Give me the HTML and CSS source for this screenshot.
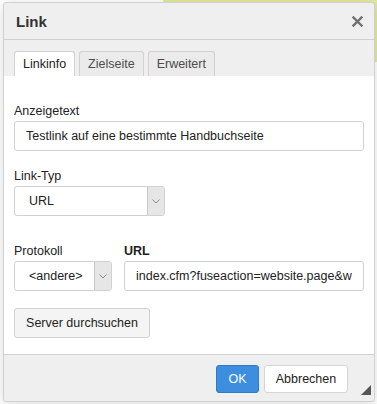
FILE: index.html
```html
<!DOCTYPE html>
<html lang="de">
<head>
    <meta charset="UTF-8">
    <title>Link</title>
    <link rel="stylesheet" href="styles.css">
</head>
<body>
    <div class="dialog">
        <div class="dialog-title">
            <span>Link</span>
            <a class="close" title="Schließen">
                <svg width="11" height="11" viewBox="0 0 11 11">
                    <path d="M1.5 1.5 L9.5 9.5 M9.5 1.5 L1.5 9.5" stroke="#707070" stroke-width="2.4" stroke-linecap="square"/>
                </svg>
            </a>
        </div>
        <div class="tabs">
            <div class="tab active">Linkinfo</div>
            <div class="tab">Zielseite</div>
            <div class="tab">Erweitert</div>
        </div>
        <div class="dialog-body">
            <div class="field">
                <label for="text">Anzeigetext</label>
                <input type="text" id="text" class="text-input" value="Testlink auf eine bestimmte Handbuchseite">
            </div>
            <div class="field">
                <label>Link-Typ</label>
                <div class="select select-type">
                    <span class="select-value">URL</span>
                    <span class="select-arrow">
                        <svg width="8" height="5" viewBox="0 0 8 5"><path d="M0.5 0.5 L4 4 L7.5 0.5" fill="none" stroke="#888" stroke-width="1"/></svg>
                    </span>
                </div>
            </div>
            <div class="field-row">
                <div class="field">
                    <label>Protokoll</label>
                    <div class="select select-proto">
                        <span class="select-value">&lt;andere&gt;</span>
                        <span class="select-arrow">
                            <svg width="8" height="5" viewBox="0 0 8 5"><path d="M0.5 0.5 L4 4 L7.5 0.5" fill="none" stroke="#888" stroke-width="1"/></svg>
                        </span>
                    </div>
                </div>
                <div class="field field-grow">
                    <label for="url" class="strong">URL</label>
                    <input type="text" id="url" class="text-input" value="index.cfm?fuseaction=website.page&amp;wsid=12">
                </div>
            </div>
            <button class="btn-browse">Server durchsuchen</button>
        </div>
        <div class="dialog-footer">
            <button class="btn btn-ok">OK</button>
            <button class="btn btn-cancel">Abbrechen</button>
            <span class="resizer"></span>
        </div>
    </div>
</body>
</html>
```

FILE: styles.css
```css
body {
    margin: 0;
    font-family: "Liberation Sans", Arial, sans-serif;
    font-size: 12.5px;
    color: #333;
    background: #fff linear-gradient(#e3e99d, #e3e99d) no-repeat 163px 0 / 214px 62px;
    height: 404px;
    overflow: hidden;
}
.dialog {
    margin: 2px 0 0 3px;
    width: 370px;
    height: 398px;
    background: #efefef;
    border: 1px solid #d1d1d1;
    border-radius: 3px;
    box-shadow: 0 2px 12px rgba(0,0,0,0.15);
    display: flex;
    flex-direction: column;
}
.dialog-title {
    height: 36px;
    border-bottom: 1px solid #d1d1d1;
    display: flex;
    align-items: center;
    justify-content: space-between;
    padding: 0 11px 0 12px;
    font-weight: bold;
    font-size: 15px;
    color: #333;
}
.close {
    display: flex;
    padding-top: 1px;
}
.tabs {
    display: flex;
    gap: 4px;
    padding: 11px 10px 0 10px;
    height: 25px;
}
.tab {
    height: 24px;
    line-height: 24px;
    padding: 0 8px;
    border: 1px solid #d1d1d1;
    border-bottom: none;
    border-radius: 3px 3px 0 0;
    background: #ebebeb;
    color: #4d4d4d;
}
.tab.active {
    background: #fff;
    color: #222;
    height: 25px;
}
.dialog-body {
    background: #fff;
    border-top: 1px solid #fff;
    padding: 26px 10px 16px 10px;
    display: flex;
    flex-direction: column;
    align-items: flex-start;
}
.field {
    display: flex;
    flex-direction: column;
    gap: 2px;
    margin-bottom: 17px;
    width: 100%;
}
.field label {
    line-height: 16px;
    color: #222;
}
.field label.strong {
    font-weight: bold;
}
.text-input {
    box-sizing: border-box;
    height: 30px;
    width: 100%;
    margin: 0;
    padding: 0 11px;
    border: 1px solid #d1d1d1;
    border-radius: 3px;
    font-family: inherit;
    font-size: 12.5px;
    color: #222;
    background: #fff;
    outline: none;
}
.select {
    box-sizing: border-box;
    height: 30px;
    display: flex;
    border: 1px solid #d1d1d1;
    border-radius: 3px;
    background: #fff;
    overflow: hidden;
}
.select-value {
    flex: 1;
    line-height: 28px;
    padding-left: 14px;
    color: #222;
}
.select-arrow {
    width: 16px;
    background: #e6e6e6;
    border-left: 1px solid #c8c8c8;
    display: flex;
    align-items: center;
    justify-content: center;
}
.select-type {
    width: 151px;
}
.field-row {
    display: flex;
    gap: 12px;
    width: 100%;
    margin-top: 10px;
}
.field-row .field {
    width: auto;
}
.select-proto {
    width: 98px;
}
.field-row .field-grow {
    flex: 1;
}
.btn-browse {
    height: 30px;
    width: 136px;
    padding: 0;
    background: #f4f4f4;
    border: 1px solid #d1d1d1;
    border-radius: 3px;
    font-family: inherit;
    font-size: 12.5px;
    color: #222;
}
.dialog-footer {
    flex: 1;
    border-top: 1px solid #d1d1d1;
    display: flex;
    justify-content: flex-end;
    align-items: flex-start;
    padding: 10px 26px 0 0;
    gap: 5px;
    position: relative;
}
.btn {
    height: 28px;
    border-radius: 3px;
    font-family: inherit;
    font-size: 12.5px;
    padding: 0;
}
.btn-ok {
    width: 43px;
    background: #3e8ee0;
    border: 1px solid #2f7bcb;
    color: #fff;
}
.btn-cancel {
    width: 84px;
    background: #fff;
    border: 1px solid #d6d6d6;
    color: #222;
}
.resizer {
    position: absolute;
    right: 3px;
    bottom: 6px;
    width: 0;
    height: 0;
    border-left: 10px solid transparent;
    border-bottom: 10px solid #555;
}
```
